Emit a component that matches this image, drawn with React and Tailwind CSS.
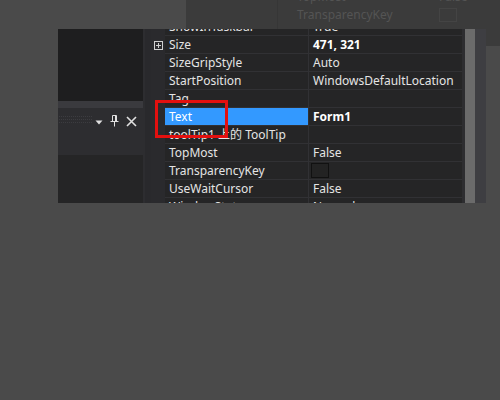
import React from 'react';

const rows = [
  { name: 'ShowInTaskbar', value: 'True' },
  { name: 'Size', value: '471, 321', bold: true, expand: true },
  { name: 'SizeGripStyle', value: 'Auto' },
  { name: 'StartPosition', value: 'WindowsDefaultLocation' },
  { name: 'Tag', value: '' },
  { name: 'Text', value: 'Form1', bold: true, selected: true },
  { name: 'toolTip1 上的 ToolTip', value: '' },
  { name: 'TopMost', value: 'False' },
  { name: 'TransparencyKey', value: '', swatch: true },
  { name: 'UseWaitCursor', value: 'False' },
  { name: 'WindowState', value: 'Normal' },
];

function PropRow({ row }) {
  return (
    <div className="flex h-[18px] shrink-0">
      <div className="flex w-[14px] items-center justify-center bg-[#2a2a2d]">
        {row.expand && (
          <svg width="9" height="9" viewBox="0 0 9 9">
            <rect x="0.5" y="0.5" width="8" height="8" fill="none" stroke="#d0d0d0" />
            <path d="M2 4.5h5M4.5 2v5" stroke="#d0d0d0" />
          </svg>
        )}
      </div>
      <div
        className={
          'flex w-[144px] items-center border-b border-r border-[#313134] pl-[4px] ' +
          (row.selected ? 'bg-[#3399ff] text-white' : 'bg-[#252526] text-[#e4e4e4]')
        }
      >
        <span className="whitespace-nowrap">{row.name}</span>
      </div>
      <div className="flex flex-1 items-center border-b border-[#313134] bg-[#252526] pl-[4px] text-[#e4e4e4]">
        {row.swatch ? (
          <div className="ml-[-2px] h-[15px] w-[18px] border border-[#111] bg-[#232323]" />
        ) : (
          <span className={'whitespace-nowrap ' + (row.bold ? 'font-bold text-white' : '')}>{row.value}</span>
        )}
      </div>
    </div>
  );
}

export default function App() {
  return (
    <div
      className="h-[400px] w-[500px] overflow-hidden bg-[#4a4a4a] text-[12px]"
      style={{ fontFamily: '"Noto Sans", "Noto Sans CJK SC", sans-serif' }}
    >
      {/* faded window behind, top strip */}
      <div className="flex h-[29px]">
        <div className="w-[186px]" />
        <div className="flex flex-1 bg-[#3b3b3b]">
          <div className="w-[92px] border-r border-[#363636]" />
          <div className="relative flex-1 overflow-hidden text-[#545454]">
            <div className="absolute left-[19px] top-[-12px] whitespace-nowrap">TopMost</div>
            <div className="absolute left-[19px] top-[6px] whitespace-nowrap">TransparencyKey</div>
            <div className="absolute left-[161px] top-[-12px]">False</div>
            <div className="absolute left-[161px] top-[8px] h-[14px] w-[18px] border border-[#444]" />
          </div>
        </div>
      </div>

      <div className="flex">
        <div className="w-[58px]" />
        <div className="relative flex h-[174px] w-[428px] overflow-hidden">
          {/* left tool panel */}
          <div className="flex w-[85px] flex-col">
            <div className="h-[72px] bg-[#1e1e1f]" />
            <div className="h-[7px] bg-[#3a3a3e]" />
            <div className="flex h-[47px] items-start bg-[#2d2d30] pt-[7px]">
              <div className="mt-[1px] flex w-[34px] flex-col gap-[2px] pl-[1px]">
                <div className="border-t border-dotted border-[#3c3c40]" />
                <div className="border-t border-dotted border-[#3c3c40]" />
                <div className="border-t border-dotted border-[#3c3c40]" />
              </div>
              <div className="ml-[3px] flex items-center gap-[7px]">
                <svg width="8" height="8" viewBox="0 0 8 8" className="mt-[1px]">
                  <path d="M0.5 2.5h7L4 6.5z" fill="#e0e0e0" />
                </svg>
                <svg width="9" height="12" viewBox="0 0 9 12">
                  <path d="M2.5 0.5v6M6.5 0.5v6M2.5 0.5h4M0.5 6.5h8M4.5 6.5v5" stroke="#e0e0e0" fill="none" />
                  <path d="M5 1v5h1V1z" fill="#e0e0e0" />
                </svg>
                <svg width="11" height="11" viewBox="0 0 11 11">
                  <path d="M1 1l9 9M10 1l-9 9" stroke="#e0e0e0" strokeWidth="1.6" />
                </svg>
              </div>
            </div>
            <div className="flex-1 bg-[#252526]" />
          </div>
          <div className="w-[2px] bg-[#2d2d30]" />
          <div className="w-[6px] bg-[#29292c]" />

          {/* property grid */}
          <div className="flex w-[311px] flex-col overflow-hidden bg-[#252526]">
            <div className="mt-[-11px] flex flex-col">
              {rows.map((r) => (
                <PropRow key={r.name} row={r} />
              ))}
            </div>
          </div>

          {/* scrollbar */}
          <div className="flex w-[24px]">
            <div className="w-[3px] bg-[#2d2d30]" />
            <div className="w-[10px] bg-[#6b6b6b]" />
            <div className="flex-1 bg-[#3e3e42]" />
          </div>

          {/* red highlight frame */}
          <div className="absolute left-[97px] top-[71px] h-[38px] w-[73px] border-[3px] border-[#e3100f]" />
        </div>
        <div className="h-[17px] w-[14px] bg-[#3b3b3b]" />
      </div>
    </div>
  );
}
